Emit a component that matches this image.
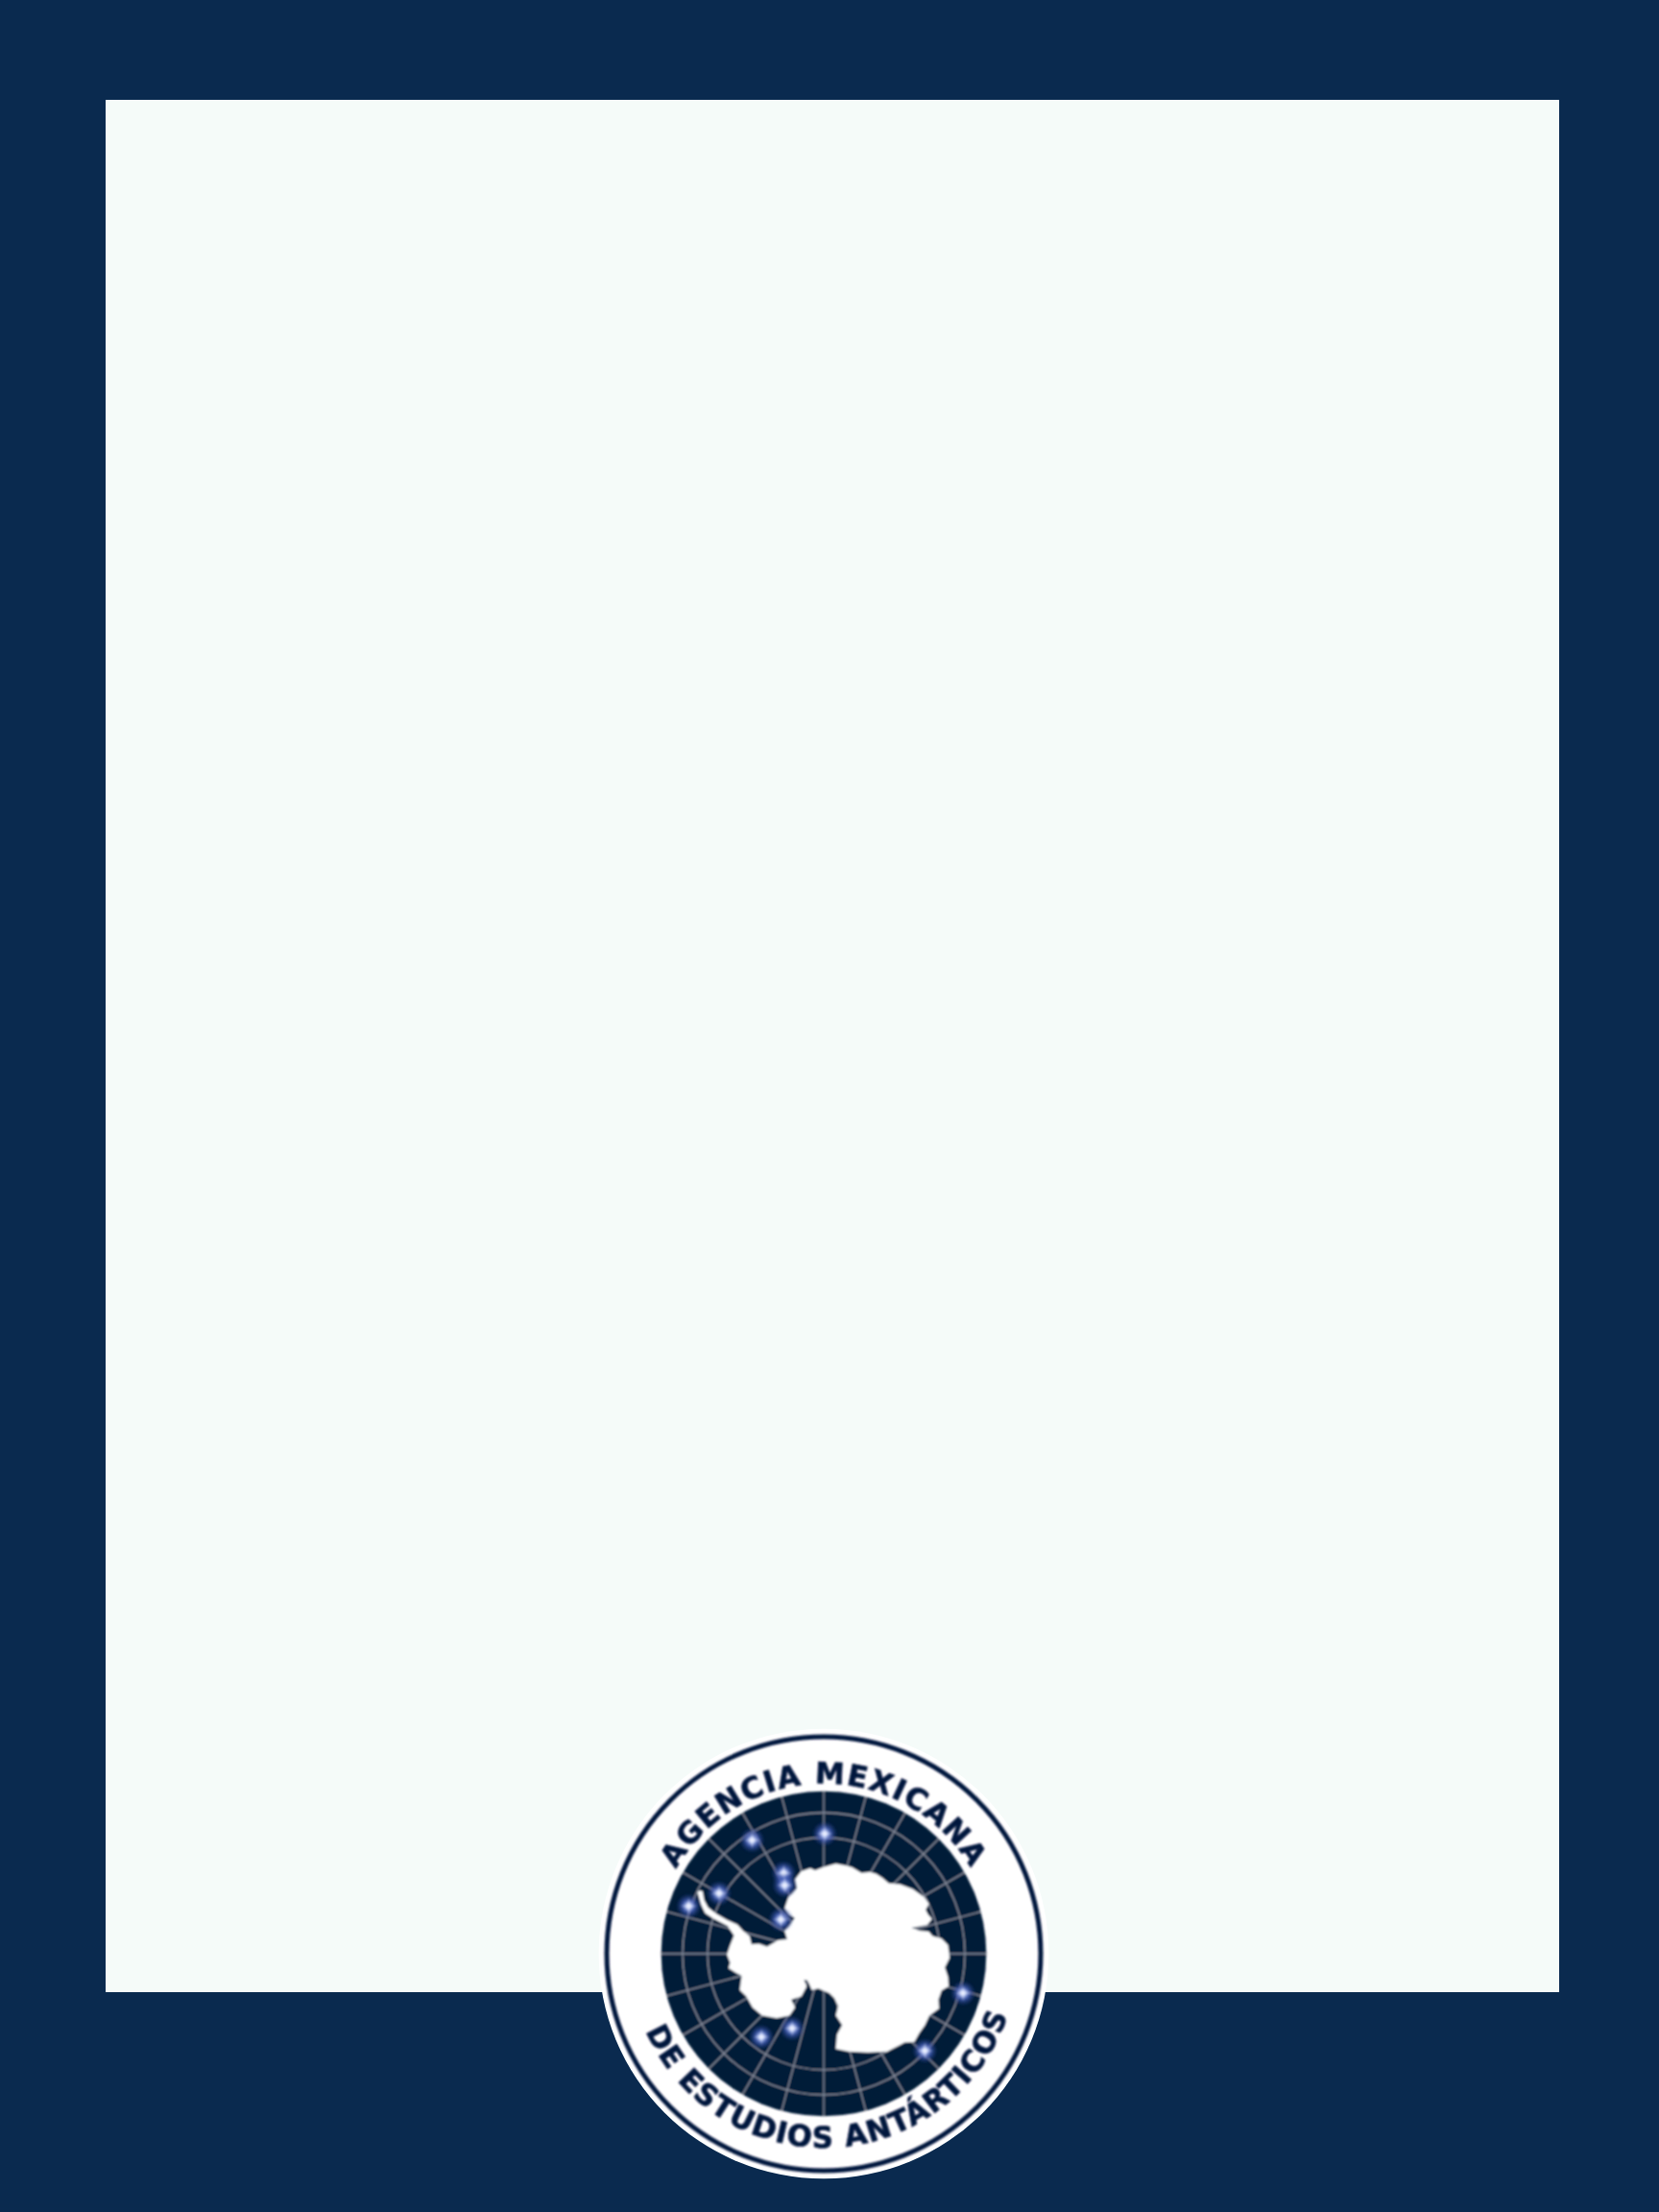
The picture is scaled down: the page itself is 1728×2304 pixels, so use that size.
import React from 'react';

const CX = 762;
const CY = 767;
const NAVY = '#031a38';
const INK = '#05143c';

// traced coast, in the same units as the logo viewBox
const coast =
  '374,570 383,572 388,600 400,622 425,642 460,662 492,676 512,698 530,712 536,738 560,736 585,745 620,725 648,722 640,695 652,682 672,655 652,644 640,625 652,590 678,562 672,535 692,510 720,500 735,507 760,497 800,486 830,492 850,497 880,515 905,512 925,517 945,530 965,547 1000,550 1040,565 1075,590 1090,612 1080,630 1088,645 1100,658 1085,677 1036,686 1060,695 1090,698 1102,712 1130,720 1150,740 1155,780 1140,810 1150,840 1152,868 1130,882 1120,910 1122,938 1092,960 1078,990 1060,1015 1045,1042 1015,1044 1000,1052 960,1072 900,1075 840,1072 800,1064 804,1020 820,990 800,960 808,930 795,905 780,890 745,875 725,880 712,850 700,848 708,870 692,900 660,910 672,935 655,960 615,968 570,960 540,935 520,900 500,880 506,835 490,828 465,812 470,795 460,770 470,740 482,710 462,680 420,658 392,640 378,612 368,575';

const stars = [
  [538, 412],
  [765, 392],
  [637, 515],
  [640, 553],
  [435, 578],
  [340, 618],
  [628, 660],
  [1197, 890],
  [1078, 1070],
  [567, 1027],
  [663, 1000],
];

const meridians = Array.from({ length: 24 }, (_, i) => (i * Math.PI) / 12);

const Logo: React.FC = () => (
  <svg viewBox="57 62 1410 1410" className="w-[470px] h-[470px]">
    <defs>
      <radialGradient id="glow">
        <stop offset="0%" stopColor="#ffffff" />
        <stop offset="20%" stopColor="#b9c9fb" />
        <stop offset="50%" stopColor="#4560bd" stopOpacity="0.75" />
        <stop offset="100%" stopColor="#28408f" stopOpacity="0" />
      </radialGradient>
      <clipPath id="disc">
        <circle cx={CX} cy={CY} r="508" />
      </clipPath>
      <filter id="soft">
        <feGaussianBlur stdDeviation="2.5" />
      </filter>
      <path id="topArc" d={`M ${CX - 532} ${CY} A 532 532 0 0 1 ${CX + 532} ${CY}`} />
      <path id="bottomArc" d={`M ${CX - 606} ${CY} A 606 606 0 0 0 ${CX + 606} ${CY}`} />
    </defs>

    <circle cx={CX} cy={CY} r="703" fill="#ffffff" />
    <circle cx={CX} cy={CY} r="678" fill="none" stroke={INK} strokeWidth="15" filter="url(#soft)" />

    <g filter="url(#soft)">
      <circle cx={CX} cy={CY} r="508" fill={NAVY} />
      <g clipPath="url(#disc)" stroke="#8b909e" strokeWidth="4" fill="none">
        <circle cx={CX} cy={CY} r="363" />
        <circle cx={CX} cy={CY} r="441" />
        {meridians.map((a, i) => (
          <line key={i} x1={CX} y1={CY} x2={CX + 508 * Math.cos(a)} y2={CY + 508 * Math.sin(a)} />
        ))}
      </g>
      <polygon points={coast} fill="#ffffff" stroke="#ffffff" strokeWidth="1" strokeLinejoin="round" />
    </g>

    <g filter="url(#soft)">
      {stars.map(([x, y]) => (
        <g key={`${x}-${y}`}>
          <circle cx={x} cy={y} r="40" fill="url(#glow)" />
          <circle cx={x} cy={y} r="7" fill="#ffffff" />
          <path
            d={`M ${x - 26} ${y} L ${x} ${y - 3} L ${x + 26} ${y} L ${x} ${y + 3} Z M ${x} ${y - 26} L ${x + 3} ${y} L ${x} ${y + 26} L ${x - 3} ${y} Z`}
            fill="#dfe7ff"
            opacity="0.8"
          />
        </g>
      ))}
    </g>

    <g
      fill={INK}
      stroke={INK}
      strokeWidth="2"
      filter="url(#soft)"
      style={{ fontFamily: '"DejaVu Sans", "Liberation Sans", sans-serif', fontWeight: 700, fontSize: '92px' }}
    >
      <text letterSpacing="5">
        <textPath href="#topArc" startOffset="50%" textAnchor="middle">
          AGENCIA MEXICANA
        </textPath>
      </text>
      <g transform={`rotate(-2.7 ${CX} ${CY})`}>
        <text letterSpacing="4">
          <textPath href="#bottomArc" startOffset="50%" textAnchor="middle">
            DE ESTUDIOS ANTÁRTICOS
          </textPath>
        </text>
      </g>
    </g>
  </svg>
);

const App: React.FC = () => {
  return (
    <div className="relative min-h-[2304px] bg-[#0a2a4f] pt-[104px] pl-[110px] pr-[104px]">
      <div className="h-[1971px] bg-[#f5fbf9]" />
      <div className="absolute left-[623px] top-[1800px]">
        <Logo />
      </div>
    </div>
  );
};

export default App;
